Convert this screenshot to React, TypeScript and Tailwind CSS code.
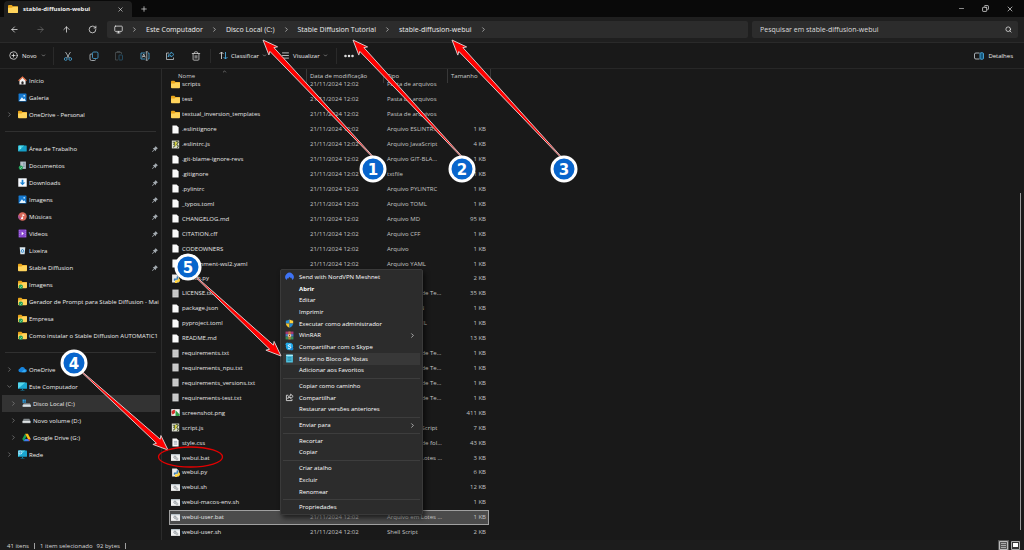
import type { ReactNode } from "react";
import React from "react";
import {
  ArrowLeft,
  ArrowRight,
  ArrowUp,
  ChevronDown,
  ChevronRight,
  ChevronUp,
  CirclePlus,
  Copy,
  Ellipsis,
  Menu,
  Minus,
  Monitor,
  Plus,
  RotateCw,
  Search,
  Trash2,
  X,
} from "lucide-react";

type IconName =
  | "folder"
  | "folderSync"
  | "home"
  | "gallery"
  | "desktop"
  | "docs"
  | "downloads"
  | "music"
  | "video"
  | "bin"
  | "cloud"
  | "pc"
  | "diskC"
  | "disk"
  | "gdrive"
  | "network"
  | "file"
  | "text"
  | "js"
  | "py"
  | "png"
  | "css"
  | "bat"
  | "nord"
  | "shield"
  | "winrar"
  | "skype"
  | "notepad"
  | "share";

const synced = (
  <>
    <circle cx="5" cy="12" r="3.8" fill="#1f9d57" />
    <path d="M3.3 12l1.3 1.3 2.2-2.5" stroke="#d6ffe5" strokeWidth="1" fill="none" />
  </>
);

const folder = (
  <>
    <path d="M0 3Q0 1.500 1.500 1.500H6l2 2h7q1 0 1 1v8H0z" fill="#e9a51a" />
    <path d="M0 6h6l2.500-1.500H16V13q0 1.500-1.500 1.500h-13Q0 14.500 0 13z" fill="#ffd45c" />
  </>
);

const monitor = (
  <>
    <rect x="0" y="1" width="16" height="11" rx="1" fill="#1aa5d0" />
    <path d="M0 12L13 1H1Q0 1 0 2z" fill="#54d6ec" />
    <path d="M7 12h2v2h2.500v1h-7v-1H7z" fill="#1684a9" />
  </>
);

const icons: Record<IconName, ReactNode> = {
  folder,
  folderSync: (
    <>
      {folder}
      {synced}
    </>
  ),
  home: (
    <>
      <path d="M2.500 7.500L8 2.500l5.500 5V15h-11z" fill="#f1f1f1" />
      <path d="M6.200 15v-4q0-1.500 1.800-1.500t1.800 1.500v4z" fill="#28282a" />
      <path d="M1 8.500L8 2l7 6.500" stroke="#e8754a" strokeWidth="2" fill="none" />
    </>
  ),
  gallery: (
    <>
      <rect x="1" y="1" width="14" height="14" rx="1" fill="#1579d0" />
      <path d="M2 14l5-6.500 3 3.500 1.500-1.500L14 14z" fill="#e5f5ff" />
      <circle cx="11" cy="5" r="1.500" fill="#bfe7ff" />
    </>
  ),
  desktop: (
    <>
      <rect x="0.500" y="2.500" width="15" height="11" rx="1" fill="#159ec6" />
      <path d="M.5 13.500L11 2.500H1.500q-1 0-1 1z" fill="#43d3e6" />
      <path d="M3 5.500h2M3 8h2" stroke="#e6ffff" />
    </>
  ),
  docs: (
    <>
      <path d="M4 1h10v13H4z" fill="#b5c2cb" />
      <path d="M9 4h3M9 7h3M9 10h3" stroke="#6c8798" strokeWidth="1.500" />
      {synced}
    </>
  ),
  downloads: (
    <>
      <rect x="0.500" y="0.500" width="15" height="15" fill="#f8fbff" />
      <path d="M6.500 3h3v5H13l-5 5-5-5h3.500z" fill="#1982d4" />
    </>
  ),
  music: (
    <>
      <circle cx="8" cy="8" r="7.500" fill="#d8695a" />
      <path d="M2 13a7.500 7.500 0 0 1-1-8l6 7z" fill="#a85495" />
      <path d="M8 11V4l3 1v2L9 6.500V11a1.800 1.800 0 1 1-1-1.500z" fill="#fff" />
    </>
  ),
  video: (
    <>
      <rect x="1" y="1" width="14" height="14" rx="1" fill="#8747ce" />
      <path d="M3 2v12M13 2v12" stroke="#c99cfb" strokeDasharray="2 1.500" />
      <path d="M6.500 5l4 3-4 3z" fill="#fff" />
    </>
  ),
  bin: (
    <>
      <path d="M3 2h10l-1.200 12.500H4.200z" fill="#dbe7ef" />
      <path d="M5.500 9L8 5.500 10.500 9 9.500 11h-3z" fill="none" stroke="#2a86cc" strokeWidth="1.500" />
    </>
  ),
  cloud: (
    <>
      <path d="M4 13a3.500 3.500 0 0 1-.5-6.900A5 5 0 0 1 12.500 7 3 3 0 0 1 13 13z" fill="#1684de" />
      <path d="M6 13l5-5a3 3 0 0 1 2 5z" fill="#35adf5" />
    </>
  ),
  pc: monitor,
  diskC: (
    <>
      <path d="M1 1h2.500v2.500H1zM4.200 1h2.500v2.500H4.200zM1 4.200h2.500v2.500H1zM4.200 4.200h2.500v2.500H4.200z" fill="#2aa8ef" />
      <path d="M3 8h11l2 3v3H1v-3z" fill="#a9b2b7" />
      <path d="M2 11h13v2H2z" fill="#e8ecef" />
    </>
  ),
  disk: (
    <>
      <path d="M3 5h10l2 4v4H1V9z" fill="#858b8e" />
      <path d="M1 9h14v3H1z" fill="#e3e6e7" />
    </>
  ),
  gdrive: (
    <>
      <path d="M5.500 1.500L.5 10.500l2.500 4L8 6z" fill="#16a35b" />
      <path d="M5.500 1.500h5l5 9h-5z" fill="#fbbc18" />
      <path d="M5.300 10.500h10.200l-2.500 4H3z" fill="#3d7df0" />
      <path d="M10.700 10.500h4.800l-2.500 4z" fill="#e4402e" />
    </>
  ),
  network: (
    <>
      {monitor}
      <circle cx="4" cy="4.500" r="3.500" fill="#b5e9fa" />
      <path d="M1 4h6M4 1v7" stroke="#1683c5" />
    </>
  ),
  file: <path d="M2.500 1h7.500l3.500 3.500V15h-11z" fill="#fafafa" />,
  text: (
    <>
      <path d="M2.500 1h11v14h-11z" fill="#cfcfcf" />
      <path d="M4 4h8M4 6.500h8M4 9h8M4 11.500h8" stroke="#b5b5b5" strokeWidth=".8" />
    </>
  ),
  js: (
    <>
      <rect x="1.500" y="1" width="13" height="14" fill="#dedfd3" />
      <path d="M3 4h4l-2 4 3 1-4 4M9 2l4 2-3 4 3 3-2 3" fill="none" stroke="#56623d" strokeWidth="2" />
      <path d="M7 4l3-1v4L7 13z" fill="#d5cf33" />
    </>
  ),
  py: (
    <>
      <path d="M2 1h8l4 4v10H2z" fill="#ececec" />
      <path d="M5 12V9q0-1 1-1h4V5q0-1 1.500-1T13 5v4q0 1-1 1H8v2z" fill="#397db5" />
      <path d="M7 15v-2q0-2 1.500-2H12V8h2.500q1.500 0 1.500 3t-2 3h-3v2H8q-1 0-1-1z" fill="#ffd23c" />
    </>
  ),
  png: (
    <>
      <rect x="0.500" y="2" width="15" height="12" fill="#f3f3f3" />
      <path d="M1 8q0-5 6-5v6l-4 3z" fill="#d42e2b" />
      <path d="M8 4l7 7v3H8z" fill="#2f9c44" />
    </>
  ),
  css: (
    <>
      <path d="M2.500 1H10l3.500 3.500V15h-11z" fill="#fafafa" />
      <path d="M5 6h6M5 8.500h6M5 11h6" stroke="#718192" />
    </>
  ),
  bat: (
    <>
      <rect x="0" y="2" width="16" height="12" fill="#f2f2f2" />
      <path d="M0 3h16" stroke="#b3bec5" strokeWidth="2" />
      <circle cx="7" cy="7.500" r="2" fill="none" stroke="#838a8f" strokeWidth="1.500" />
      <circle cx="10.500" cy="10.500" r="1.800" fill="none" stroke="#9aa0a4" strokeWidth="1.500" />
    </>
  ),
  nord: (
    <path d="M2.500 14A7.500 7.500 0 1 1 13.500 14L10.500 9.500l-1 1.500L8 8.500 5.500 12l-.8-1.200z" fill="#3e73f5" />
  ),
  shield: (
    <>
      <path d="M8 1v7H1.500V3Q5 3 8 1z" fill="#268ed8" />
      <path d="M8 1v7h6.500V3Q11 3 8 1z" fill="#ffd23c" />
      <path d="M1.500 8H8v7.500Q2 13 1.500 8z" fill="#f5c52c" />
      <path d="M8 8h6.500Q14 13 8 15.500z" fill="#2587ce" />
    </>
  ),
  winrar: (
    <>
      <rect x="1" y="1" width="14" height="4.500" fill="#a73a72" />
      <rect x="1" y="5.500" width="14" height="4.500" fill="#4975c5" />
      <rect x="1" y="10" width="14" height="5" fill="#3b8c55" />
      <path d="M6 1h4v14H6z" fill="#c77b37" />
      <rect x="5" y="6" width="6" height="4" fill="#f0d6a2" />
      <path d="M7 7h2v2H7z" fill="#8e3227" />
    </>
  ),
  skype: (
    <>
      <circle cx="8" cy="8" r="6.500" fill="#22a8ea" />
      <circle cx="4" cy="4" r="3" fill="#22a8ea" />
      <circle cx="12" cy="12" r="3" fill="#1685d3" />
      <path d="M10.500 5.500Q8 3.800 6 5.500t2 2.500 2 2.700-4.500.3" fill="none" stroke="#fff" strokeWidth="1.600" />
    </>
  ),
  notepad: (
    <>
      <rect x="2" y="1" width="12" height="14" rx="1" fill="#4fc1df" />
      <path d="M2 2.500h12" stroke="#b3edf9" strokeWidth="2" />
      <path d="M4.500 6.500h7M4.500 9h7M4.500 11.500h7" stroke="#14708d" />
    </>
  ),
  share: (
    <path
      d="M6 4H2.500v9.500h10V11M10 2l4.500 4L10 10V7.500Q6.500 7.300 5 10q.3-5 5-5.500z"
      fill="none"
      stroke="#e4e4e4"
      strokeWidth="1.500"
    />
  ),
};

function Icon({ name, className = "size-[9px]" }: { name: IconName; className?: string }) {
  return (
    <svg viewBox="0 0 16 16" className={`shrink-0 ${className}`} aria-hidden="true">
      {icons[name]}
    </svg>
  );
}

// Two-tone outline icons of the command bar: light strokes with a blue accent.
const commands: { label: string; art: ReactNode }[] = [
  {
    label: "Recortar",
    art: (
      <>
        <path d="M5 2l7.500 12M15 2L7.500 14" />
        <g stroke="#4aa8dc">
          <circle cx="5.500" cy="16" r="2.800" />
          <circle cx="14.500" cy="16" r="2.800" />
        </g>
      </>
    ),
  },
  {
    label: "Copiar",
    art: (
      <>
        <path d="M6 6H4Q2 6 2 8v8q0 3 3 3h6q2 0 2-2" />
        <rect x="7" y="2" width="11" height="13" rx="2.500" stroke="#4aa8dc" />
      </>
    ),
  },
  {
    label: "Colar",
    art: (
      <>
        <path d="M8 18H3V3h12v3M6 3V1h6v2" stroke="#4a5053" />
        <rect x="10" y="8" width="7" height="10" rx="1" stroke="#28556f" />
      </>
    ),
  },
  {
    label: "Renomear",
    art: (
      <>
        <path d="M11 4H2v12h9M16 4h2v12h-2" stroke="#4aa8dc" />
        <path d="M4.500 13L7.500 6l3 7M5.500 11h4M13.500 2v16M11.500 1.500h4M11.500 18.500h4" />
      </>
    ),
  },
  {
    label: "Compartilhar",
    art: (
      <>
        <path d="M8 4H3v13h14v-4" />
        <path d="M12 2l6 5-6 5V9q-4 0-6 3 0-7 6-7z" stroke="#4aa8dc" />
      </>
    ),
  },
];

function Pin() {
  return (
    <svg viewBox="0 0 12 12" className="mr-[2px] size-[6px] shrink-0" aria-hidden="true">
      <path d="M7 0l5 5-2 .5-2 2.500-.5 2.500-2.500-2.500L1 12l-1-1 4-4-2.500-2.500L4 4l2.500-2z" fill="#a3aab0" />
    </svg>
  );
}

type SideItem = {
  label: string;
  icon: IconName;
  pinned?: boolean;
  arrow?: "right" | "down";
  nested?: boolean;
  active?: boolean;
};

const sideGroups: SideItem[][] = [
  [
    { label: "Início", icon: "home" },
    { label: "Galeria", icon: "gallery" },
    { label: "OneDrive - Personal", icon: "folder", arrow: "right" },
  ],
  [
    { label: "Área de Trabalho", icon: "desktop", pinned: true },
    { label: "Documentos", icon: "docs", pinned: true },
    { label: "Downloads", icon: "downloads", pinned: true },
    { label: "Imagens", icon: "gallery", pinned: true },
    { label: "Músicas", icon: "music", pinned: true },
    { label: "Vídeos", icon: "video", pinned: true },
    { label: "Lixeira", icon: "bin", pinned: true },
    { label: "Stable Diffusion", icon: "folder", pinned: true },
    { label: "Imagens", icon: "folderSync" },
    { label: "Gerador de Prompt para Stable Diffusion - Mai", icon: "folderSync" },
    { label: "Empresa", icon: "folderSync" },
    { label: "Como instalar o Stable Diffusion AUTOMATIC1", icon: "folderSync" },
  ],
  [
    { label: "OneDrive", icon: "cloud", arrow: "right" },
    { label: "Este Computador", icon: "pc", arrow: "down" },
    { label: "Disco Local (C:)", icon: "diskC", arrow: "right", nested: true, active: true },
    { label: "Novo volume (D:)", icon: "disk", arrow: "right", nested: true },
    { label: "Google Drive (G:)", icon: "gdrive", arrow: "right", nested: true },
    { label: "Rede", icon: "network", arrow: "right" },
  ],
];

type FileRow = [name: string, icon: IconName, type: string, size: string];

const files: FileRow[] = [
  ["scripts", "folder", "Pasta de arquivos", ""],
  ["test", "folder", "Pasta de arquivos", ""],
  ["textual_inversion_templates", "folder", "Pasta de arquivos", ""],
  [".eslintignore", "file", "Arquivo ESLINTR...", "1 KB"],
  [".eslintrc.js", "js", "Arquivo JavaScript", "4 KB"],
  [".git-blame-ignore-revs", "file", "Arquivo GIT-BLA...", "1 KB"],
  [".gitignore", "file", "txtfile", "1 KB"],
  [".pylintrc", "file", "Arquivo PYLINTRC", "1 KB"],
  ["_typos.toml", "file", "Arquivo TOML", "1 KB"],
  ["CHANGELOG.md", "file", "Arquivo MD", "95 KB"],
  ["CITATION.cff", "file", "Arquivo CFF", "1 KB"],
  ["CODEOWNERS", "file", "Arquivo", "1 KB"],
  ["environment-wsl2.yaml", "file", "Arquivo YAML", "1 KB"],
  ["launch.py", "py", "Python File", "2 KB"],
  ["LICENSE.txt", "text", "Documento de Te...", "35 KB"],
  ["package.json", "file", "Arquivo JSON", "1 KB"],
  ["pyproject.toml", "file", "Arquivo TOML", "1 KB"],
  ["README.md", "file", "Arquivo MD", "13 KB"],
  ["requirements.txt", "text", "Documento de Te...", "1 KB"],
  ["requirements_npu.txt", "text", "Documento de Te...", "1 KB"],
  ["requirements_versions.txt", "text", "Documento de Te...", "1 KB"],
  ["requirements-test.txt", "text", "Documento de Te...", "1 KB"],
  ["screenshot.png", "png", "Arquivo PNG", "411 KB"],
  ["script.js", "js", "Arquivo JavaScript", "7 KB"],
  ["style.css", "css", "Documento de fol...", "43 KB"],
  ["webui.bat", "bat", "Arquivo em Lotes ...", "3 KB"],
  ["webui.py", "py", "Python File", "6 KB"],
  ["webui.sh", "bat", "Shell Script", "12 KB"],
  ["webui-macos-env.sh", "bat", "Shell Script", "1 KB"],
  ["webui-user.bat", "bat", "Arquivo em Lotes ...", "1 KB"],
  ["webui-user.sh", "bat", "Shell Script", "2 KB"],
];

type MenuEntry = { label: string; icon?: IconName; bold?: boolean; sub?: boolean; hover?: boolean };

const menuGroups: MenuEntry[][] = [
  [
    { label: "Send with NordVPN Meshnet", icon: "nord" },
    { label: "Abrir", bold: true },
    { label: "Editar" },
    { label: "Imprimir" },
    { label: "Executar como administrador", icon: "shield" },
    { label: "WinRAR", icon: "winrar", sub: true },
    { label: "Compartilhar com o Skype", icon: "skype" },
    { label: "Editar no Bloco de Notas", icon: "notepad", hover: true },
    { label: "Adicionar aos Favoritos" },
  ],
  [{ label: "Copiar como caminho" }, { label: "Compartilhar", icon: "share" }, { label: "Restaurar versões anteriores" }],
  [{ label: "Enviar para", sub: true }],
  [{ label: "Recortar" }, { label: "Copiar" }],
  [{ label: "Criar atalho" }, { label: "Excluir" }, { label: "Renomear" }],
  [{ label: "Propriedades" }],
];

function TitleBar() {
  return (
    <header className="flex h-[17px] items-end bg-[#090909] pl-1">
      <div className="flex h-4 w-32 items-center rounded-t-[4px] bg-[#1f1f1f] pl-1 pr-2">
        <Icon name="folder" className="size-[10px]" />
        <span className="ml-[5px] flex-1 font-bold">stable-diffusion-webui</span>
        <button type="button" aria-label="Fechar guia">
          <X className="size-[7px]" />
        </button>
      </div>
      <button type="button" aria-label="Nova guia" className="mb-1 ml-2">
        <Plus className="size-2" />
      </button>
      <div className="ml-auto flex items-center gap-[17px] self-center pr-[10px]">
        <button type="button" aria-label="Minimizar">
          <Minus className="size-[7px]" />
        </button>
        <button type="button" aria-label="Restaurar">
          <Copy className="size-[7px] -scale-x-100" strokeWidth={2.5} />
        </button>
        <button type="button" aria-label="Fechar">
          <X className="size-2" />
        </button>
      </div>
    </header>
  );
}

function NavBar() {
  const crumbs = ["Este Computador", "Disco Local (C:)", "Stable Diffusion Tutorial", "stable-diffusion-webui"];
  return (
    <div className="flex h-[26px] items-center border-b border-[#2a2a2a] bg-[#1f1f1f] pr-[6px] text-[7px]">
      <div className="flex w-[107px] shrink-0 items-center gap-[17px] pl-[10px]">
        <button type="button" aria-label="Voltar">
          <ArrowLeft className="size-[9px]" />
        </button>
        <button type="button" aria-label="Avançar" className="text-[#696969]">
          <ArrowRight className="size-[9px]" />
        </button>
        <button type="button" aria-label="Acima">
          <ArrowUp className="size-[9px]" />
        </button>
        <button type="button" aria-label="Atualizar">
          <RotateCw className="size-[9px]" />
        </button>
      </div>
      <nav className="flex h-[17px] min-w-0 flex-1 items-center gap-2 rounded-[2px] bg-[#2c2c2c] pl-[7px]">
        <Monitor className="size-[9px] shrink-0" />
        <ChevronRight className="size-[7px] shrink-0" />
        {crumbs.map((crumb) => (
          <React.Fragment key={crumb}>
            <a href="#" className="whitespace-nowrap">
              {crumb}
            </a>
            <ChevronRight className="size-[7px] shrink-0" />
          </React.Fragment>
        ))}
      </nav>
      <label className="ml-1 flex h-[17px] w-[266px] shrink-0 items-center rounded-[2px] bg-[#2c2c2c] pl-2 pr-[6px]">
        <input
          type="search"
          aria-label="Pesquisar"
          placeholder="Pesquisar em stable-diffusion-webui"
          className="min-w-0 flex-1 bg-transparent outline-none placeholder:text-[#dcdcdc]"
        />
        <Search className="size-[7px]" strokeWidth={2.5} />
      </label>
    </div>
  );
}

function ToolBar() {
  return (
    <div className="flex h-[26px] shrink-0 items-center border-b border-[#272727] pl-[9px] pr-[11px]">
      <button type="button" className="flex w-[45px] items-center gap-1 border-r border-[#2a2a2a] py-1">
        <CirclePlus className="size-[9px]" />
        Novo
        <ChevronDown className="size-[5px]" />
      </button>
      <div className="flex w-[157px] items-center justify-between border-r border-[#2a2a2a] py-[2px] pl-[9px] pr-[9px]">
        {commands.map(({ label, art }) => (
          <button key={label} type="button" aria-label={label}>
            <svg viewBox="0 0 20 20" className="size-[10px]" fill="none" stroke="#c0c8cc" strokeWidth="1.600">
              {art}
            </svg>
          </button>
        ))}
        <button type="button" aria-label="Excluir">
          <Trash2 className="size-[10px] text-[#c8c8c8]" />
        </button>
      </div>
      <button type="button" className="ml-2 flex items-center gap-[3px]">
        <svg viewBox="0 0 18 18" className="size-[9px]" fill="none" strokeWidth="1.800" aria-hidden="true">
          <path d="M5 16V2M1 6l4-4 4 4" stroke="#d0d0d0" />
          <path d="M13 2v14M9 12l4 4 4-4" stroke="#4aa8dc" />
        </svg>
        Classificar
        <ChevronDown className="size-[5px]" />
      </button>
      <button type="button" className="ml-[14px] flex items-center gap-[3px]">
        <Menu className="size-[9px]" />
        Visualizar
        <ChevronDown className="size-[5px]" />
      </button>
      <button type="button" aria-label="Mais opções" className="ml-2 border-l border-[#2a2a2a] py-[2px] pl-[6px]">
        <Ellipsis className="size-3" strokeWidth={3} />
      </button>
      <button type="button" className="ml-auto flex items-center gap-1">
        <svg viewBox="0 0 20 16" className="h-2 w-[10px]" fill="none" strokeWidth="1.800" aria-hidden="true">
          <path d="M11 2H4Q1 2 1 4v8q0 2 3 2h7" stroke="#b8c0c5" />
          <rect x="12" y="1.500" width="7" height="13" rx="2" fill="#14587d" stroke="#4aa8dc" />
        </svg>
        Detalhes
      </button>
    </div>
  );
}

function SideRow({ item }: { item: SideItem }) {
  return (
    <li>
      <button
        type="button"
        className={`flex h-[17px] w-full items-center whitespace-nowrap text-left ${item.active ? "bg-[#333333]" : ""} ${
          item.nested ? "pl-2" : "pl-1"
        }`}
      >
        <span className="flex w-3 shrink-0 text-[#9a9a9a]">
          {item.arrow === "right" && <ChevronRight className="size-[7px]" />}
          {item.arrow === "down" && <ChevronDown className="size-[7px]" />}
        </span>
        <Icon name={item.icon} />
        <span className="ml-[2px] flex-1">{item.label}</span>
        {item.pinned && <Pin />}
      </button>
    </li>
  );
}

function SideBar() {
  return (
    <aside className="w-[162px] shrink-0 border-r border-[#2b2b2b] pl-[2px] pt-[3px]">
      {sideGroups.map((group, i) => (
        <React.Fragment key={i}>
          {i > 0 && <hr className="my-2 ml-[3px] mr-[5px] border-[#303030]" />}
          <ul className="pr-px">
            {group.map((item) => (
              <SideRow key={item.label} item={item} />
            ))}
          </ul>
        </React.Fragment>
      ))}
    </aside>
  );
}

function HeadCell({ children, className = "" }: { children: ReactNode; className?: string }) {
  return (
    <th scope="col" className="h-2 p-0 text-left font-normal">
      <div className={`relative -mb-[6px] flex h-[14px] items-center border-r border-[#383838] text-[#cfcfcf] ${className}`}>
        {children}
      </div>
    </th>
  );
}

function FileTable() {
  return (
    <main className="flex min-w-0 flex-1 pl-[7px]">
      <table className="h-[471px] w-80 table-fixed border-collapse whitespace-nowrap">
        <colgroup>
          <col className="w-[138px]" />
          <col className="w-[77px]" />
          <col className="w-16" />
          <col className="w-[41px]" />
        </colgroup>
        <thead>
          <tr>
            <HeadCell className="pl-[9px]">
              Nome
              <ChevronUp className="absolute left-1/2 top-0 -ml-4 size-[5px]" />
            </HeadCell>
            <HeadCell className="pl-[3px]">Data de modificação</HeadCell>
            <HeadCell className="pl-[3px]">Tipo</HeadCell>
            <HeadCell className="-mr-[2px] pl-[3px]">Tamanho</HeadCell>
          </tr>
        </thead>
        <tbody className="text-[#c4c4c4]">
          {files.map(([name, icon, type, size]) => (
            <tr
              key={name}
              className={name === "webui-user.bat" ? "bg-[#4b4b4b] outline outline-1 -outline-offset-1 outline-[#a0a0a0]" : ""}
            >
              <td className="p-0">
                <div className="flex items-center gap-[2px] pl-[2px] text-[#e6e6e6]">
                  <Icon name={icon} />
                  {name}
                </div>
              </td>
              <td className="p-0 pl-[3px]">21/11/2024 12:02</td>
              <td className="p-0 pl-[3px]">{type}</td>
              <td className="p-0 pr-[3px] text-right">{size}</td>
            </tr>
          ))}
        </tbody>
      </table>
      <div className="ml-auto flex flex-col justify-end pb-[10px] pr-[3px]">
        <div className="h-[337px] w-px bg-[#9a9a9a]" />
      </div>
    </main>
  );
}

function ContextMenu() {
  return (
    <div
      role="menu"
      className="absolute left-[280px] top-[269px] flex h-[246px] w-[143px] flex-col rounded-[2px] border border-[#3a3a3a] bg-[#2c2c2c] px-[2px] py-px shadow-[2px_3px_5px_rgba(0,0,0,0.6)]"
    >
      {menuGroups.map((group, i) => (
        <React.Fragment key={i}>
          {i > 0 && <div role="separator" className="my-px h-[2px] border-b border-[#3d3d3d]" />}
          {group.map((entry) => (
            <button
              key={entry.label}
              type="button"
              role="menuitem"
              className={`flex flex-1 items-center whitespace-nowrap pl-[2px] pr-1 text-left leading-none text-white ${
                entry.hover ? "bg-[#383838]" : ""
              } ${entry.bold ? "font-bold" : ""}`}
            >
              <span className="flex w-[14px] shrink-0">{entry.icon && <Icon name={entry.icon} />}</span>
              {entry.label}
              {entry.sub && <ChevronRight className="ml-auto size-[7px]" />}
            </button>
          ))}
        </React.Fragment>
      ))}
    </div>
  );
}

function StatusBar() {
  return (
    <footer className="flex h-[11px] shrink-0 items-center bg-[#1c1c1c] pl-[7px] pr-1 text-[#d8d8d8]">
      <span>41 itens</span>
      <span className="mx-[5px] h-[6px] w-px bg-[#a0a0a0]" />
      <span>1 item selecionado</span>
      <span className="ml-1">92 bytes</span>
      <span className="ml-[5px] h-[6px] w-px bg-[#a0a0a0]" />
      <div className="ml-auto flex items-center gap-[2px]">
        <button type="button" aria-label="Lista detalhada" className="bg-[#555555] p-px">
          <svg viewBox="0 0 9 9" className="size-[9px]">
            <path d="M.5.5h8v8h-8z" fill="#555" stroke="#bbb" />
            <path d="M2 2.500h5M2 4.500h5M2 6.500h5" stroke="#aaa" />
          </svg>
        </button>
        <button type="button" aria-label="Miniaturas grandes">
          <svg viewBox="0 0 9 9" className="size-[9px]">
            <path d="M.5.5h8v8h-8z" fill="#333" stroke="#aaa" />
            <path d="M2 2h5v4H2z" fill="#fff" />
          </svg>
        </button>
      </div>
    </footer>
  );
}

type Mark = { n: number; x: number; y: number; from: [number, number]; to: [number, number] };

const marks: Mark[] = [
  { n: 1, x: 373, y: 169, from: [372, 156], to: [263, 40] },
  { n: 2, x: 462, y: 169, from: [461, 156], to: [353, 40] },
  { n: 3, x: 564, y: 169, from: [560, 156], to: [452, 40] },
  { n: 4, x: 74, y: 363, from: [83, 373], to: [168, 450] },
  { n: 5, x: 188, y: 267, from: [197, 278], to: [281, 356] },
];

// Tapered shaft that widens towards a barbed head.
function arrowPoints([x1, y1]: [number, number], [x2, y2]: [number, number]) {
  const len = Math.hypot(x2 - x1, y2 - y1);
  const ux = (x2 - x1) / len;
  const uy = (y2 - y1) / len;
  const at = (back: number, side: number) =>
    `${(x2 - ux * back - uy * side).toFixed(1)},${(y2 - uy * back + ux * side).toFixed(1)}`;
  return [at(len, 0.4), at(13, 2.8), at(15, 6), at(0, 0), at(15, -6), at(13, -2.8), at(len, -0.4)].join(" ");
}

function Annotations() {
  return (
    <div className="pointer-events-none absolute inset-0 overflow-hidden">
      <svg className="absolute inset-0 size-full" aria-hidden="true">
        {marks.map((m) => (
          <polygon key={m.n} points={arrowPoints(m.from, m.to)} fill="#fe0000" stroke="#d8c8c8" strokeWidth="1" />
        ))}
        <ellipse cx="190.500" cy="457" rx="32" ry="10" fill="none" stroke="#e30000" strokeWidth="1.300" />
      </svg>
      {marks.map((m) => (
        <span
          key={m.n}
          className="absolute flex size-[27px] -translate-x-1/2 -translate-y-1/2 items-center justify-center rounded-full border-[3px] border-white bg-[#0865cc] font-['DejaVu_Sans',sans-serif] text-[15px] font-bold text-white"
          style={{ left: m.x, top: m.y }}
        >
          {m.n}
        </span>
      ))}
    </div>
  );
}

export default function App() {
  return (
    <div className="relative flex min-h-screen flex-col overflow-hidden bg-[#191919] font-['Open_Sans','Noto_Sans',sans-serif] text-[6px] font-medium leading-[10px] text-[#ececec]">
      <TitleBar />
      <NavBar />
      <ToolBar />
      <div className="flex flex-1">
        <SideBar />
        <FileTable />
      </div>
      <StatusBar />
      <ContextMenu />
      <Annotations />
    </div>
  );
}
